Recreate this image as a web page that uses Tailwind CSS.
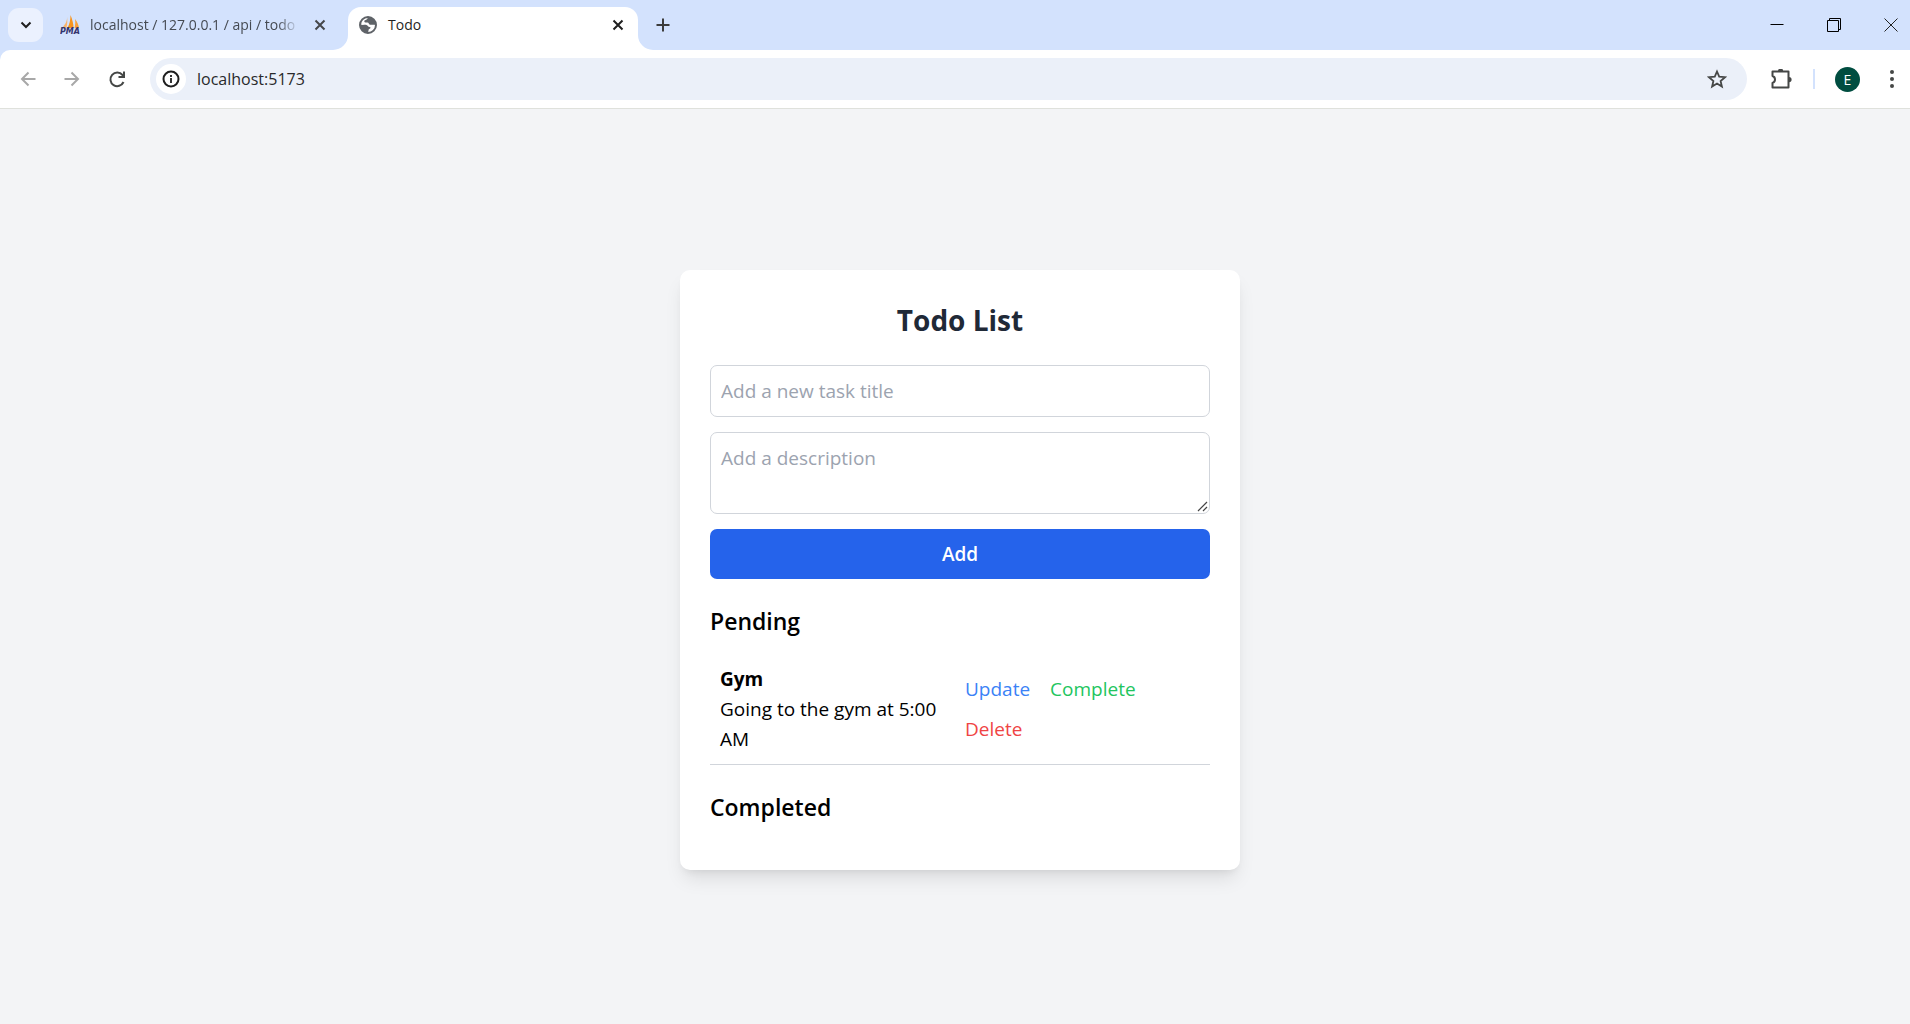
<!DOCTYPE html>
<html lang="en">
<head>
<meta charset="utf-8">
<title>Todo</title>
<script src="https://cdn.jsdelivr.net/npm/@tailwindcss/browser@4"></script>
</head>
<body class="flex min-h-screen flex-col bg-[#f3f4f6] font-['Open_Sans','Noto_Sans',sans-serif] text-[19px] leading-[30px] text-black">
  <header>
    <nav aria-label="Tabs" class="flex h-[50px] items-center bg-[#d3e2fd] text-[14px] leading-5">
      <button aria-label="Search tabs" class="ml-2 grid h-[34px] w-[35px] shrink-0 place-items-center rounded-[11px] bg-[#ebf1fe]">
        <svg class="size-3" viewBox="0 0 12 12" fill="none" stroke="#1f1f1f" stroke-width="2"><path d="M1.500 3.500 6 8l4.500-4.500"/></svg>
      </button>
      <div class="flex w-[305px] items-center pl-[17px]">
        <svg class="h-5 w-5 shrink-0" viewBox="0 0 20 20">
          <path d="M7 1.500C7.500 6 5 10 1.500 13.500L6.500 12.500C7.500 9 7.500 5 7 1.500Z" fill="#f9b36b"/>
          <path d="M10.500 0C12.500 5 13.500 9 13.500 13L7.500 13C9.500 9 10.500 5 10.500 0Z" fill="#f7941d"/>
          <path d="M15 4C17.500 7 18.500 10 19 13L14.500 13C15.300 10 15.500 7 15 4Z" fill="#f9a13a"/>
          <text x="0" y="19" font-family="DejaVu Sans" font-size="8" font-weight="bold" font-style="italic" fill="#34346e">PMA</text>
        </svg>
        <a href="#" class="ml-[10px] w-[209px] overflow-hidden whitespace-nowrap text-[#454a52] mask-r-from-90%">localhost / 127.0.0.1 / api / todo</a>
        <button aria-label="Close tab" class="ml-[15px]">
          <svg class="size-3" viewBox="0 0 12 12" stroke="#45474a" stroke-width="2"><path d="m1.500 1.500 9 9m0-9-9 9"/></svg>
        </button>
      </div>
      <div class="relative flex h-[43px] w-[290px] items-center self-end rounded-t-[13px] bg-white pr-[14px] pb-[7px] pl-[11px]">
        <svg class="absolute bottom-0 -left-[15px] size-[15px]" viewBox="0 0 15 15" fill="#fff"><path d="M15 0v15H0A15 15 0 0 0 15 0Z"/></svg>
        <svg class="absolute -right-[15px] bottom-0 size-[15px]" viewBox="0 0 15 15" fill="#fff"><path d="M0 0v15h15A15 15 0 0 1 0 0Z"/></svg>
        <svg class="size-[18px]" viewBox="0 0 18 18"><circle cx="9" cy="9" r="8" fill="#fff" stroke="#5f6368" stroke-width="2"/><path d="M9 1.500C8.500 3 7 4 5.500 4.500c-.500 1 0 2 1 2h2c1.500 0 1 2 2.500 2.300 1.500.300 3-.600 5.500.200C16.800 4 13 1 9 1.500ZM1.500 8.500c2 .800 4.500 0 6 .500 1.500.500 1.500 2 3 2 1 0 1.500 1 .500 1.500s-1.500 1-1.500 2-.500 2-1.500 2.300C4 16.500 1 13 1.500 8.500Z" fill="#5f6368"/></svg>
        <a href="#" class="ml-[11px] flex-1 text-[#1f1f1f]">Todo</a>
        <button aria-label="Close tab">
          <svg class="size-3" viewBox="0 0 12 12" stroke="#1f1f1f" stroke-width="2"><path d="m1.500 1.500 9 9m0-9-9 9"/></svg>
        </button>
      </div>
      <button aria-label="New tab" class="ml-[18px]">
        <svg class="size-[14px]" viewBox="0 0 14 14" stroke="#3c3c3c" stroke-width="2"><path d="M7 .500v13M.500 7h13"/></svg>
      </button>
      <div class="ml-auto flex items-center gap-[43px] pr-3">
        <button aria-label="Minimize"><svg class="size-[14px]" viewBox="0 0 14 14" stroke="#000"><path d="M.500 6.500h13"/></svg></button>
        <button aria-label="Restore"><svg class="size-[14px]" viewBox="0 0 14 14" fill="none" stroke="#000"><path d="M.500 2.500h11v11H.500ZM2.500 2.500V.500h11v11h-2"/></svg></button>
        <button aria-label="Close window"><svg class="size-[14px]" viewBox="0 0 14 14" stroke="#222"><path d="m.500.500 13 13m0-13-13 13"/></svg></button>
      </div>
    </nav>
    <div class="bg-[#d3e2fd]">
      <div class="flex h-[59px] items-center rounded-tl-[10px] border-b border-[#dfe1dc] bg-white pr-4 pl-5">
        <button aria-label="Back"><svg class="size-4" viewBox="0 0 16 16" fill="none" stroke="#a8a8a8" stroke-width="2"><path d="M15.500 8H2m6.500-6.500L2 8l6.500 6.500"/></svg></button>
        <button aria-label="Forward" class="ml-7"><svg class="size-4" viewBox="0 0 16 16" fill="none" stroke="#a8a8a8" stroke-width="2"><path d="M.500 8H14M7.500 1.500 14 8l-6.500 6.500"/></svg></button>
        <button aria-label="Reload" class="ml-[29px]"><svg class="size-[17px]" viewBox="0 0 17 17" fill="none" stroke="#454746" stroke-width="2"><path d="M14.500 11A6.800 6.800 0 1 1 13.500 4L15 6M15 .500V6H9.500"/></svg></button>
        <label class="ml-6 flex h-[42px] flex-1 items-center rounded-full bg-[#ebf0f9] pr-5 pl-[6px]">
          <span class="grid size-[30px] place-items-center rounded-full bg-white">
            <svg class="size-[18px]" viewBox="0 0 18 18" fill="none" stroke="#1f1f1f" stroke-width="2"><circle cx="9" cy="9" r="7.500"/><path d="M9 8v5M9 5v2" stroke-width="1.800"/></svg>
          </span>
          <input aria-label="Address" class="ml-[11px] min-w-0 flex-1 text-[16px] leading-6 text-[#28292b] outline-none" value="localhost:5173">
          <button aria-label="Bookmark" class="shrink-0"><svg class="size-5" viewBox="0 0 20 20" fill="none" stroke="#454746" stroke-width="1.800"><path d="m10 2.500 2.200 5.200 5.800.500-4.400 3.800 1.300 5.600-4.900-3-4.900 3 1.300-5.600L2 8.200l5.800-.500Z"/></svg></button>
        </label>
        <button aria-label="Extensions" class="ml-6"><svg class="h-[21px] w-[21px]" viewBox="0 0 21 21" fill="none" stroke="#454746" stroke-width="2"><path d="M1.500 2.500h16v16h-16v-4.500q2.500-.800 2.500-3.500t-2.500-3.500Z" stroke-linejoin="round"/><path d="M7 2.200a2.600 2.600 0 0 1 5.200 0ZM18 8a2.600 2.600 0 0 1 0 5.200Z" fill="#454746" stroke="none"/></svg></button>
        <span class="ml-[21px] h-5 w-[2px] bg-[#d3e2fd]"></span>
        <button aria-label="Profile" class="ml-5 size-[25px] rounded-full bg-[#004d40] text-[14px] leading-[25px] text-white">E</button>
        <button aria-label="Menu" class="ml-[30px]"><svg class="h-[18px] w-1" viewBox="0 0 4 18" fill="#454746"><circle cx="2" cy="2" r="2"/><circle cx="2" cy="9" r="2"/><circle cx="2" cy="16" r="2"/></svg></button>
      </div>
    </div>
  </header>

  <main class="flex flex-1 items-center justify-center pt-[6px] pl-[10px]">
    <section class="w-full max-w-[560px] rounded-[10px] bg-white p-[30px] shadow-[0_12px_19px_-4px_rgb(0_0_0/0.1),0_5px_8px_-5px_rgb(0_0_0/0.1)]">
      <h1 class="mb-[25px] text-center text-[28px] leading-10 font-bold text-[#1f2937]">Todo List</h1>
      <form class="flex flex-col gap-[15px]">
        <input aria-label="Task title" placeholder="Add a new task title" class="h-[52px] w-full rounded-[7px] border border-[#d1d5db] px-[10px] placeholder:text-[#9ca3af]">
        <div class="relative flex">
          <textarea aria-label="Description" placeholder="Add a description" class="h-[82px] w-full resize-none rounded-[7px] border border-[#d1d5db] p-[10px] placeholder:text-[#9ca3af]"></textarea>
          <svg class="absolute right-[2px] bottom-[2px] size-[11px]" viewBox="0 0 11 11" stroke="#444" stroke-width="1.200"><path d="M1 10 10 1M6 10l4-4"/></svg>
        </div>
        <button type="button" class="h-[50px] rounded-[7px] bg-[#2563eb] font-semibold text-white">Add</button>
      </form>
      <h2 class="mt-[25px] mb-[15px] text-[23px] leading-[35px] font-semibold">Pending</h2>
      <ul>
        <li class="flex items-center border-b border-[#d1d5db] p-[10px]">
          <div class="flex-1 pr-[15px]">
            <h3 class="font-bold">Gym</h3>
            <p>Going to the gym at 5:00 AM</p>
          </div>
          <div class="flex w-[235px] flex-wrap gap-x-5 gap-y-[10px]">
            <button class="text-[#3b82f6]">Update</button>
            <button class="text-[#22c55e]">Complete</button>
            <button class="text-[#ef4444]">Delete</button>
          </div>
        </li>
      </ul>
      <h2 class="mt-[25px] mb-[15px] text-[23px] leading-[35px] font-semibold">Completed</h2>
    </section>
  </main>
</body>
</html>
